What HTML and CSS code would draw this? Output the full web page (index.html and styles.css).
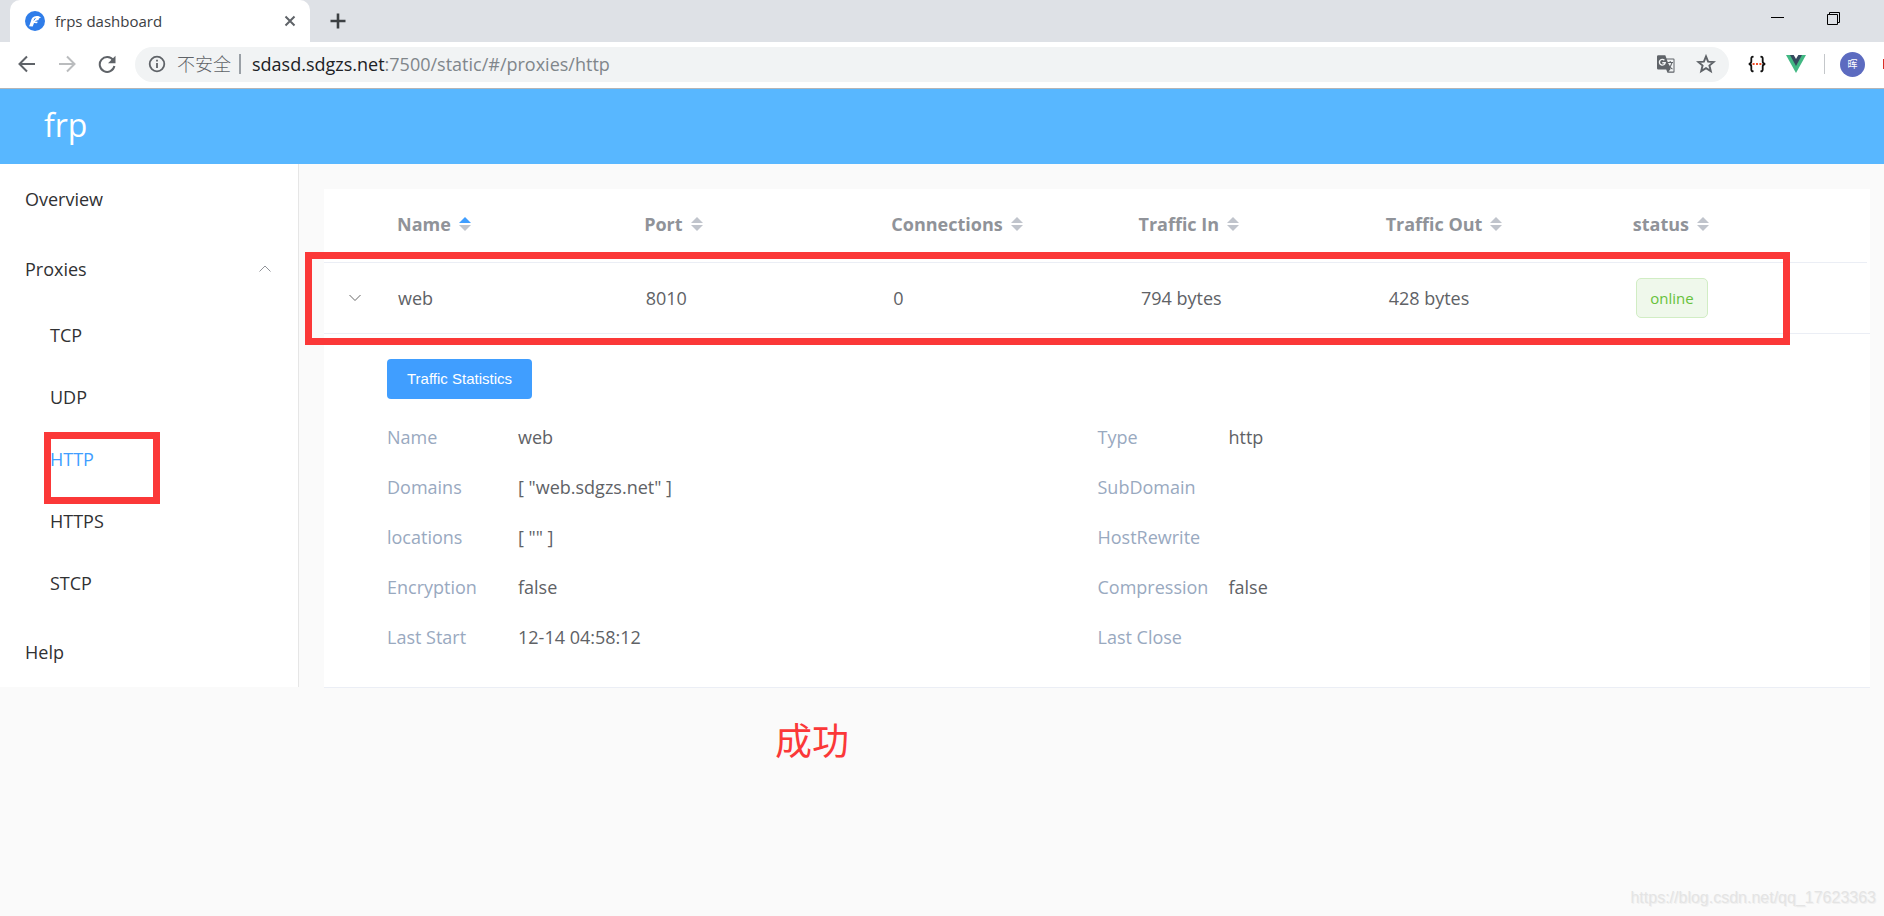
FILE: index.html
```html
<!DOCTYPE html>
<html lang="en">
<head>
<meta charset="utf-8">
<meta name="viewport" content="width=device-width, initial-scale=1">
<title>frps dashboard</title>
<link rel="stylesheet" href="styles.css">
</head>
<body>
<div class="browser">
  <div class="tabstrip">
    <div class="tab">
      <svg class="favicon" viewBox="0 0 20 20" width="20" height="20" aria-hidden="true"><circle cx="10" cy="10" r="10" fill="#2f7de9"/><path d="M4 15.300c1-2 1.400-3.400 2-5.300.7-2.600 2-4.700 5.600-4.900 2-.1 3.200.5 4.400 1.500l-2 1-.6 1.600c-1.600 0-2.700.6-3.600 1.400l3 .1-.8 1.500-3-.1-1.300 3.300z" fill="#fff"/><path d="M8.800 9.400l1.600-2.300" stroke="#2f7de9" stroke-width="1"/></svg>
      <span class="tab-title">frps dashboard</span>
      <button class="icon-btn tab-close" aria-label="Close tab"><svg viewBox="0 0 12 12" width="12" height="12"><path d="M1.500 1.500l9 9M10.500 1.500l-9 9" stroke="#5f6368" stroke-width="2" fill="none"/></svg></button>
    </div>
    <button class="icon-btn new-tab" aria-label="New tab"><svg viewBox="0 0 16 16" width="16" height="16"><path d="M8 .5v15M.5 8h15" stroke="#3c4043" stroke-width="2.600"/></svg></button>
    <div class="window-controls">
      <button class="icon-btn" aria-label="Minimize"><svg viewBox="0 0 14 14" width="14" height="14"><path d="M0 6.500h13" stroke="#000"/></svg></button>
      <button class="icon-btn" aria-label="Restore"><svg viewBox="0 0 14 14" width="14" height="14"><path d="M.5 3.500h10v10H.5zM2.500 3V1.500h10v10H11" fill="none" stroke="#000"/></svg></button>
    </div>
  </div>
  <div class="toolbar">
    <div class="nav-buttons">
      <button class="icon-btn" aria-label="Back"><svg viewBox="0 0 18 18" width="18" height="18"><path d="M17 9H2M9 1.500L1.500 9 9 16.500" fill="none" stroke="#5f6368" stroke-width="2"/></svg></button>
      <button class="icon-btn" aria-label="Forward" disabled><svg viewBox="0 0 18 18" width="18" height="18"><path d="M1 9h15M9 1.500L16.500 9 9 16.500" fill="none" stroke="#babcbe" stroke-width="2"/></svg></button>
      <button class="icon-btn" aria-label="Reload"><svg viewBox="0 0 18 18" width="18" height="18"><path d="M15.200 5.200A7.400 7.400 0 1 0 16.400 11" fill="none" stroke="#5f6368" stroke-width="2"/><path d="M17.500.8v7.400H10z" fill="#5f6368"/></svg></button>
    </div>
    <div class="omnibox">
      <svg class="info" viewBox="0 0 18 18" width="18" height="18" aria-hidden="true"><circle cx="9" cy="9" r="7.300" fill="none" stroke="#5f6368" stroke-width="1.800"/><path d="M9 8v5M9 4.800v1.800" stroke="#5f6368" stroke-width="1.800"/></svg>
      <span class="insecure" lang="zh">不安全</span>
      <span class="omni-sep"></span>
      <label class="host" for="url">sdasd.sdgzs.net</label>
      <input id="url" class="url" type="text" value=":7500/static/#/proxies/http">
      <button class="icon-btn" aria-label="Translate"><svg viewBox="0 0 18 18" width="18" height="18"><path d="M0 1.500Q0 .2 1.300.2h7l1.200 3.300h7q1 0 1 1v12.500q0 .8-1 .8h-6l-1.300-3.300H1.300Q0 14.500 0 13.200z" fill="#5f6368"/><path d="M9.800 4.500h6.700v12h-5l2-2.200z" fill="#f1f3f4"/><path d="M7.400 5.200a2.900 2.900 0 1 0 .8 2.500H5.300" fill="none" stroke="#f1f3f4" stroke-width="1.400"/><path d="M10.500 7.500h5.500M13.200 6v1.500M11.200 9.500q1.500 3.500 4.300 4.500M15 7.700q-1 4-3.600 5.600" fill="none" stroke="#5f6368" stroke-width="1.100"/></svg></button>
      <button class="icon-btn" aria-label="Bookmark"><svg viewBox="0 0 20 20" width="20" height="20"><path d="M10 2.400l2.100 5.200 5.600.4-4.300 3.600 1.400 5.500-4.800-3-4.800 3 1.400-5.500L2.300 8l5.600-.4z" fill="none" stroke="#5f6368" stroke-width="1.900"/></svg></button>
    </div>
    <div class="extensions">
      <button class="icon-btn" aria-label="JSON viewer"><svg viewBox="0 0 18 18" width="18" height="18"><path d="M5.500 1.800Q3.300 1.500 3.300 3.500v3Q3.300 8.700.8 9q2.500.3 2.500 2.500v3q0 2 2.200 1.700M12.500 1.800q2.200-.3 2.200 1.700v3q0 2.200 2.500 2.500-2.500.3-2.500 2.500v3q0 2-2.200 1.700" fill="none" stroke="#111" stroke-width="1.800"/><path d="M4.600 9h2M8 9h2M11.400 9h2" stroke="#f0502a" stroke-width="2"/></svg></button>
      <button class="icon-btn" aria-label="Vue devtools"><svg viewBox="0 0 22 18" width="22" height="18"><path d="M1 0h20L11 18z" fill="#41b883"/><path d="M5 0h12l-6 11z" fill="#35495e"/><path d="M8.700 0h4.600L11 4z" fill="#fff"/></svg></button>
      <span class="ext-sep"></span>
      <button class="avatar" aria-label="Profile" lang="zh">晖</button>
      <span class="update"></span>
    </div>
  </div>
</div>

<header class="app-header"><a class="brand" href="#/">frp</a></header>

<div class="layout">
  <nav class="sidebar">
    <ul class="menu">
      <li><a class="item" href="#/">Overview</a></li>
      <li>
        <a class="item" href="#/proxies">Proxies<svg viewBox="0 0 12 8" width="12" height="8" aria-hidden="true"><path d="M.5 6.500L6 1l5.500 5.500" fill="none" stroke="#909399"/></svg></a>
        <ul class="submenu">
          <li><a class="subitem" href="#/proxies/tcp">TCP</a></li>
          <li><a class="subitem" href="#/proxies/udp">UDP</a></li>
          <li class="marked"><a class="subitem active" href="#/proxies/http">HTTP</a><span class="mark mark-menu"></span></li>
          <li><a class="subitem" href="#/proxies/https">HTTPS</a></li>
          <li><a class="subitem" href="#/proxies/stcp">STCP</a></li>
        </ul>
      </li>
      <li><a class="item" href="#/help">Help</a></li>
    </ul>
  </nav>
  <main class="content">
    <section class="card">
      <table class="grid grid-head">
        <colgroup><col class="col-expand"><col><col><col><col><col><col></colgroup>
        <thead><tr>
          <th></th>
          <th><button class="sort asc">Name<svg viewBox="0 0 12 14" width="12" height="14"><path class="up" d="M6 0l6 6H0z"/><path class="down" d="M6 14l6-6H0z"/></svg></button></th>
          <th><button class="sort">Port<svg viewBox="0 0 12 14" width="12" height="14"><path class="up" d="M6 0l6 6H0z"/><path class="down" d="M6 14l6-6H0z"/></svg></button></th>
          <th><button class="sort">Connections<svg viewBox="0 0 12 14" width="12" height="14"><path class="up" d="M6 0l6 6H0z"/><path class="down" d="M6 14l6-6H0z"/></svg></button></th>
          <th><button class="sort">Traffic In<svg viewBox="0 0 12 14" width="12" height="14"><path class="up" d="M6 0l6 6H0z"/><path class="down" d="M6 14l6-6H0z"/></svg></button></th>
          <th><button class="sort">Traffic Out<svg viewBox="0 0 12 14" width="12" height="14"><path class="up" d="M6 0l6 6H0z"/><path class="down" d="M6 14l6-6H0z"/></svg></button></th>
          <th><button class="sort">status<svg viewBox="0 0 12 14" width="12" height="14"><path class="up" d="M6 0l6 6H0z"/><path class="down" d="M6 14l6-6H0z"/></svg></button></th>
        </tr></thead>
      </table>
      <div class="marked">
        <table class="grid grid-body">
          <colgroup><col class="col-expand"><col><col><col><col><col><col></colgroup>
          <tbody><tr>
            <td class="expand"><button class="icon-btn" aria-label="Collapse row"><svg viewBox="0 0 12 8" width="12" height="8"><path d="M.5 1L6 6.500 11.500 1" fill="none" stroke="#666"/></svg></button></td>
            <td>web</td><td>8010</td><td>0</td><td>794 bytes</td><td>428 bytes</td>
            <td><span class="tag">online</span></td>
          </tr></tbody>
        </table>
        <span class="mark mark-row"></span>
      </div>
      <div class="detail">
        <button class="primary">Traffic Statistics</button>
        <dl class="fields">
          <div><dt>Name</dt><dd>web</dd></div>
          <div><dt>Type</dt><dd>http</dd></div>
          <div><dt>Domains</dt><dd>[ "web.sdgzs.net" ]</dd></div>
          <div><dt>SubDomain</dt><dd></dd></div>
          <div><dt>locations</dt><dd>[ "" ]</dd></div>
          <div><dt>HostRewrite</dt><dd></dd></div>
          <div><dt>Encryption</dt><dd>false</dd></div>
          <div><dt>Compression</dt><dd>false</dd></div>
          <div><dt>Last Start</dt><dd>12-14 04:58:12</dd></div>
          <div><dt>Last Close</dt><dd></dd></div>
        </dl>
      </div>
    </section>
    <p class="note" lang="zh">成功</p>
  </main>
</div>
<footer class="watermark">https://blog.csdn.net/qq_17623363</footer>
</body>
</html>
```

FILE: styles.css
```css
* { box-sizing: border-box; }

body {
  margin: 0;
  min-height: 100vh;
  display: flex;
  flex-direction: column;
  background: #fafafa;
  color: #606266;
  font: 18px/26px "Open Sans", "Noto Sans CJK SC", sans-serif;
}

button, input { font: inherit; color: inherit; }
a { color: inherit; text-decoration: none; }
ul, dl, dd, p { margin: 0; padding: 0; }
ul { list-style: none; }
svg { display: block; flex: none; }

.icon-btn {
  display: flex;
  align-items: center;
  justify-content: center;
  flex: none;
  padding: 0;
  border: 0;
  background: none;
}

/* Browser frame */
.browser { border-bottom: 1px solid #b4b5b7; overflow: hidden; }

.tabstrip {
  display: flex;
  height: 42px;
  padding-left: 10px;
  background: #dee1e6;
}
.tab {
  display: flex;
  align-items: center;
  width: 300px;
  padding: 0 14px 0 15px;
  border-radius: 10px 10px 0 0;
  background: #fff;
}
.tab-title {
  flex: 1;
  margin-left: 10px;
  color: #3c4043;
  font-size: 15px;
}
.new-tab { margin-left: 20px; }
.window-controls {
  display: flex;
  align-items: flex-start;
  gap: 42px;
  margin-left: auto;
  padding: 11px 43px 0 0;
}

.toolbar {
  display: flex;
  align-items: center;
  height: 46px;
  padding-bottom: 2px;
  background: #fff;
}
.nav-buttons {
  display: flex;
  gap: 22px;
  padding: 0 19px 0 18px;
}
.omnibox {
  display: flex;
  flex: 1;
  align-items: center;
  height: 35px;
  padding: 0 13px;
  border-radius: 18px;
  background: #f1f3f4;
}
.insecure { margin-left: 11px; color: #5f6368; font-weight: 300; }
.omni-sep { width: 2px; height: 20px; margin: 0 11px 0 8px; background: #9aa0a6; }
.host { color: #202124; }
.url {
  flex: 1;
  min-width: 0;
  padding: 0;
  border: 0;
  outline: 0;
  background: none;
  color: #80868b;
}
.omnibox .icon-btn { margin-left: 21px; }
.extensions {
  display: flex;
  align-items: center;
  padding-left: 19px;
}
.extensions .icon-btn { margin-right: 19px; }
.ext-sep { width: 1px; height: 20px; margin: 0 15px 0 -2px; background: #c4c7ca; }
.avatar {
  flex: none;
  width: 25px;
  height: 25px;
  padding: 0;
  border: 0;
  border-radius: 50%;
  background: #5c6bc0;
  color: #fff;
  font-size: 10px;
  line-height: 25px;
}
.update { width: 1px; height: 10px; margin-left: 18px; background: #d93025; }

/* Dashboard */
.app-header {
  display: flex;
  align-items: center;
  height: 75px;
  padding: 0 44px 4px;
  background: #58b7ff;
}
.brand { color: #fff; font-size: 32px; line-height: 40px; }

.layout { display: flex; align-items: flex-start; }

.sidebar {
  flex: none;
  width: 299px;
  border-right: 1px solid #e6e6e6;
  background: #fff;
  color: #303133;
}
.item {
  display: flex;
  align-items: center;
  justify-content: space-between;
  height: 70px;
  padding: 0 27px 0 25px;
}
.submenu { padding-bottom: 3px; }
.subitem { display: block; padding-left: 50px; line-height: 62px; }
.subitem.active { color: #409eff; }

.content { flex: 1; min-width: 0; padding: 25px 14px 0 25px; }
.card { border-bottom: 1px solid #ebeef5; background: #fff; }

.grid {
  table-layout: fixed;
  width: 100%;
  border-spacing: 0;
  text-align: left;
}
.grid-head { width: calc(100% - 3px); }
.col-expand { width: 60px; }
.grid th, .grid td { padding: 0 13px; border-bottom: 1px solid #ebeef5; }
.grid th { height: 74px; padding-bottom: 4px; }
.grid td { height: 71px; padding-left: 14px; }
.grid .expand { padding: 0 25px; }

.sort {
  display: flex;
  align-items: center;
  gap: 8px;
  padding: 0;
  border: 0;
  background: none;
  color: #909399;
  font-size: 18px;
  font-weight: 700;
}
.sort path { fill: #c0c4cc; }
.sort.asc .up { fill: #409eff; }

.tag {
  display: inline-block;
  padding: 0 13px;
  border: 1px solid #d1edc4;
  border-radius: 5px;
  background: #eff8eb;
  color: #67c23a;
  font-size: 15px;
  line-height: 38px;
}

.detail { padding: 25px 62px 25px 63px; }
.primary {
  display: block;
  height: 40px;
  margin-bottom: 13px;
  padding: 0 20px;
  border: 0;
  border-radius: 4px;
  background: #409eff;
  color: #fff;
  font-family: "Liberation Sans", Arial, sans-serif;
  font-size: 15px;
}
.fields { display: grid; grid-template-columns: 1fr 1fr; }
.fields div { display: flex; line-height: 50px; }
.fields dt { flex: none; width: 131px; color: #99a9bf; }

/* Red annotations drawn over the page */
.marked { position: relative; }
.mark {
  position: absolute;
  border: 7px solid #fb3838;
  pointer-events: none;
}
.mark-menu { top: 4px; left: 44px; width: 116px; height: 72px; }
.mark-row { top: -11px; right: 80px; bottom: -11px; left: -19px; }

.note {
  margin: 24px 0 0 451px;
  color: #fb3838;
  font-family: "Noto Sans CJK SC", sans-serif;
  font-size: 37px;
  line-height: 54px;
}

.watermark {
  margin: auto 8px 6px auto;
  color: #e4e4e4;
  font: 16px/24px "Liberation Sans", Arial, sans-serif;
  text-shadow: 1px 1px 0 #f0f0f0;
}
```
